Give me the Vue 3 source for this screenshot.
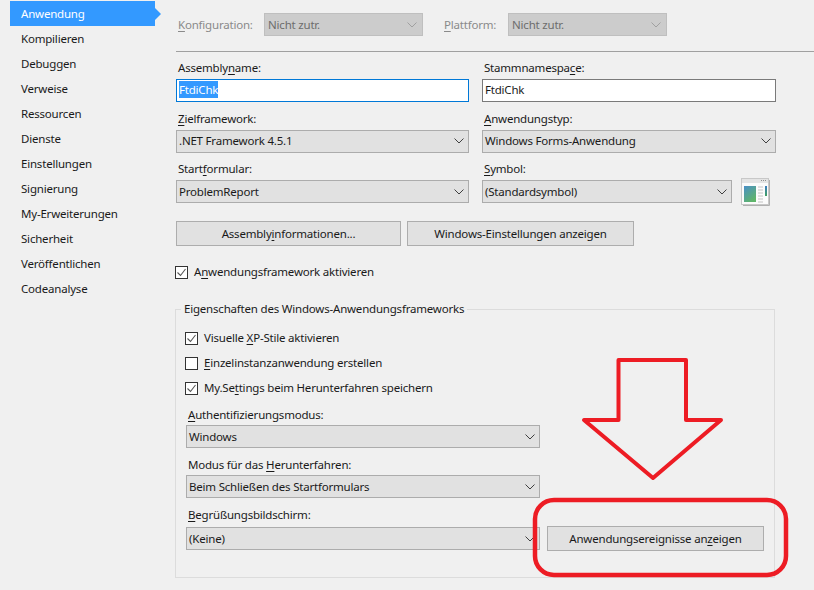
<script setup>
const navItems = ['Anwendung','Kompilieren','Debuggen','Verweise','Ressourcen','Dienste','Einstellungen','Signierung','My-Erweiterungen','Sicherheit','Veröffentlichen','Codeanalyse']
</script>

<template>
  <div class="page">
    <nav class="sidebar">
      <div v-for="(item, i) in navItems" :key="item" class="nav-item" :class="{ active: i === 0 }">{{ item }}</div>
    </nav>
    <main class="main">
      <div class="config-row">
        <span class="config-label first"><u>K</u>onfiguration:</span>
        <div class="select disabled config-select"><span>Nicht zutr.</span><svg class="chev" width="10" height="6" viewBox="0 0 10 6"><path d="M.5.5 5 5 9.5.5" fill="none" stroke="#a0a0a0"/></svg></div>
        <span class="config-label second"><u>P</u>lattform:</span>
        <div class="select disabled config-select"><span>Nicht zutr.</span><svg class="chev" width="10" height="6" viewBox="0 0 10 6"><path d="M.5.5 5 5 9.5.5" fill="none" stroke="#a0a0a0"/></svg></div>
      </div>
      <div class="divider"></div>

      <div class="form-grid">
        <div class="field">
          <label>Assembly<u>n</u>ame:</label>
          <div class="input focused"><span class="selected">FtdiChk</span></div>
        </div>
        <div class="field">
          <label>Stammnamespa<u>c</u>e:</label>
          <div class="input">FtdiChk</div>
        </div>
        <div class="field">
          <label><u>Z</u>ielframework:</label>
          <div class="select"><span>.NET Framework 4.5.1</span><svg class="chev" width="10" height="6" viewBox="0 0 10 6"><path d="M.5.5 5 5 9.5.5" fill="none" stroke="#404040"/></svg></div>
        </div>
        <div class="field">
          <label><u>A</u>nwendungstyp:</label>
          <div class="select"><span>Windows Forms-Anwendung</span><svg class="chev" width="10" height="6" viewBox="0 0 10 6"><path d="M.5.5 5 5 9.5.5" fill="none" stroke="#404040"/></svg></div>
        </div>
        <div class="field">
          <label>Start<u>f</u>ormular:</label>
          <div class="select"><span>ProblemReport</span><svg class="chev" width="10" height="6" viewBox="0 0 10 6"><path d="M.5.5 5 5 9.5.5" fill="none" stroke="#404040"/></svg></div>
        </div>
        <div class="field">
          <label><u>S</u>ymbol:</label>
          <div class="symbol-row">
            <div class="select symbol-select"><span>(Standardsymbol)</span><svg class="chev" width="10" height="6" viewBox="0 0 10 6"><path d="M.5.5 5 5 9.5.5" fill="none" stroke="#404040"/></svg></div>
            <div class="symbol-icon">
              <svg width="29" height="28" viewBox="0 0 29 28">
                <defs>
                  <linearGradient id="symGrad" x1="0" y1="0" x2="0.6" y2="1">
                    <stop offset="0" stop-color="#4a8fc8"/>
                    <stop offset="1" stop-color="#5fb56a"/>
                  </linearGradient>
                  <linearGradient id="symBar" x1="0" y1="0" x2="0" y2="1">
                    <stop offset="0" stop-color="#3a7cc0"/>
                    <stop offset="1" stop-color="#3fa060"/>
                  </linearGradient>
                </defs>
                <rect x="0.5" y="0.5" width="27" height="26" fill="#fbfbfb" stroke="#c8c8c8"/>
                <path d="M28.5 2v25.500H2" fill="none" stroke="#b0b0b0"/>
                <rect x="1" y="1" width="26" height="4" fill="#e4e4e4"/>
                <path d="M20 2.500h6" stroke="#909090" stroke-dasharray="1 1"/>
                <rect x="3" y="8" width="12" height="16" fill="url(#symGrad)"/>
                <path d="M17 9h5M17 12h5M17 15h5M17 18h5M17 21h5M17 24h5" stroke="#d6d6d6" stroke-width="1.400"/>
                <rect x="24" y="8" width="2" height="10" fill="url(#symBar)"/>
              </svg>
            </div>
          </div>
        </div>
      </div>

      <div class="button-row">
        <button class="btn info-btn">Assembly<u>i</u>nformationen...</button>
        <button class="btn win-btn">Windows-Einstellungen anzeigen</button>
      </div>

      <label class="check app-check">
        <span class="box"><svg width="11" height="11" viewBox="0 0 11 11"><path d="m1.500 5.500 3 3 5-6.500" fill="none" stroke="#555" stroke-width="1.100"/></svg></span>
        <span>A<u>n</u>wendungsframework aktivieren</span>
      </label>

      <fieldset class="framework">
        <legend>Eigenschaften des Windows-Anwendungsframeworks</legend>
        <div class="check-list">
          <label class="check">
            <span class="box"><svg width="11" height="11" viewBox="0 0 11 11"><path d="m1.500 5.500 3 3 5-6.500" fill="none" stroke="#555" stroke-width="1.100"/></svg></span>
            <span>Visuelle <u>X</u>P-Stile aktivieren</span>
          </label>
          <label class="check">
            <span class="box"></span>
            <span><u>E</u>inzelinstanzanwendung erstellen</span>
          </label>
          <label class="check">
            <span class="box"><svg width="11" height="11" viewBox="0 0 11 11"><path d="m1.500 5.500 3 3 5-6.500" fill="none" stroke="#555" stroke-width="1.100"/></svg></span>
            <span>My.Se<u>t</u>tings beim Herunterfahren speichern</span>
          </label>
        </div>
        <div class="fw-field auth">
          <label><u>A</u>uthentifizierungsmodus:</label>
          <div class="select fw-select"><span>Windows</span><svg class="chev" width="10" height="6" viewBox="0 0 10 6"><path d="M.5.5 5 5 9.5.5" fill="none" stroke="#404040"/></svg></div>
        </div>
        <div class="fw-field shutdown">
          <label>Modus für das <u>H</u>erunterfahren:</label>
          <div class="select fw-select"><span>Beim Schließen des Startformulars</span><svg class="chev" width="10" height="6" viewBox="0 0 10 6"><path d="M.5.5 5 5 9.5.5" fill="none" stroke="#404040"/></svg></div>
        </div>
        <div class="fw-field splash">
          <label><u>B</u>egrüßungsbildschirm:</label>
          <div class="splash-row">
            <div class="select fw-select"><span>(Keine)</span><svg class="chev" width="10" height="6" viewBox="0 0 10 6"><path d="M.5.5 5 5 9.5.5" fill="none" stroke="#404040"/></svg></div>
            <button class="btn events-btn">Anwendungsereignisse an<u>z</u>eigen</button>
          </div>
        </div>
      </fieldset>
    </main>

    <svg class="annotation" width="814" height="590" viewBox="0 0 814 590">
      <path d="M618.500 360H686V420H721L653 478 584 420H618.500Z" fill="none" stroke="#ed1c24" stroke-width="4" stroke-linejoin="round"/>
      <rect x="535" y="500" width="251" height="75" rx="19" fill="none" stroke="#ed1c24" stroke-width="4.500"/>
    </svg>
  </div>
</template>

<style scoped>
.page {
  position: relative;
  width: 814px;
  height: 590px;
  overflow: hidden;
  display: flex;
  background: #f0f0f0;
  color: #1a1a1a;
  font-family: "Noto Sans", "Open Sans", sans-serif;
  font-size: 11.5px;
  letter-spacing: -0.2px;
  line-height: 16px;
}
u { text-underline-offset: 2px; text-decoration-thickness: 1px; }
.sidebar { width: 176px; flex: none; padding: 1px 21px 0 10px; box-sizing: border-box; }
.nav-item { position: relative; height: 25px; line-height: 25px; padding-left: 11px; }
.nav-item.active { background: #3399ff; color: #fff; }
.nav-item.active::after {
  content: "";
  position: absolute;
  left: 100%;
  top: 7px;
  border-left: 6px solid #3399ff;
  border-top: 6px solid transparent;
  border-bottom: 6px solid transparent;
}
.main { flex: 1; min-width: 0; }
.config-row { display: flex; align-items: center; height: 23px; margin-top: 13px; }
.config-label { color: #8a8a8a; padding-left: 2px; }
.config-label.first { width: 86px; }
.config-label.second { width: 62px; margin-left: 19px; padding-right: 2px; }
.config-select { width: 159px; }
.divider { height: 1px; background: #a0a0a0; margin-top: 15px; }
.form-grid {
  display: grid;
  grid-template-columns: 293px 294px;
  column-gap: 13px;
  grid-auto-rows: 45px;
  row-gap: 5.5px;
  margin-top: 5px;
}
.field { display: flex; flex-direction: column; justify-content: flex-end; }
.field label, .fw-field label { display: block; padding-left: 2px; }
.field label { margin-bottom: 3px; }
.fw-field label { margin-bottom: 2px; }
.input {
  height: 23px;
  box-sizing: border-box;
  border: 1px solid #7a7a7a;
  background: #fff;
  line-height: 20px;
  padding-left: 2px;
}
.input.focused { border-color: #0078d7; }
.selected { background: #3399ff; color: #fff; display: inline-block; height: 17px; line-height: 17px; }
.select {
  height: 23px;
  box-sizing: border-box;
  border: 1px solid #acacac;
  background: #e1e1e1;
  display: flex;
  align-items: center;
  justify-content: space-between;
  padding: 0 4px 0 2px;
}
.select.disabled { background: #cccccc; border-color: #bfbfbf; color: #6d6d6d; padding: 0 5px 0 3px; }
.chev { flex: none; margin-right: 0; }
.symbol-row { display: flex; align-items: center; height: 23px; }
.symbol-select { width: 250px; flex: none; }
.symbol-icon { margin-left: 9px; height: 28px; flex: none; }
.button-row { display: flex; gap: 6px; margin-top: 18px; }
.btn {
  height: 25px;
  box-sizing: border-box;
  border: 1px solid #adadad;
  background: #e1e1e1;
  color: #1a1a1a;
  font: inherit;
  letter-spacing: inherit;
  padding: 0;
}
.info-btn { width: 225px; }
.win-btn { width: 227px; }
.check { display: flex; align-items: center; height: 16px; }
.box {
  width: 13px;
  height: 13px;
  box-sizing: border-box;
  border: 1px solid #333;
  background: #fff;
  margin-right: 6px;
  display: flex;
  align-items: center;
  justify-content: center;
  flex: none;
}
.app-check { margin-top: 18px; margin-left: -1px; }
.framework {
  width: 600px;
  height: 277px;
  box-sizing: border-box;
  margin: 21px 0 0 -1px;
  padding: 0 0 0 10px;
  border: 1px solid #dcdcdc;
  min-width: 0;
}
.framework legend { padding: 0 3px; margin-left: -5px; }
.check-list { display: flex; flex-direction: column; gap: 9px; margin-top: 13px; margin-left: -1px; }
.auth { margin-top: 11px; }
.shutdown, .splash { margin-top: 9px; }
.fw-select { width: 354px; flex: none; }
.splash-row { display: flex; align-items: flex-start; margin-top: 4px; }
.events-btn { width: 217px; margin: -1px 0 0 7px; height: 25px; }
.annotation { position: absolute; left: 0; top: 0; pointer-events: none; }
</style>
